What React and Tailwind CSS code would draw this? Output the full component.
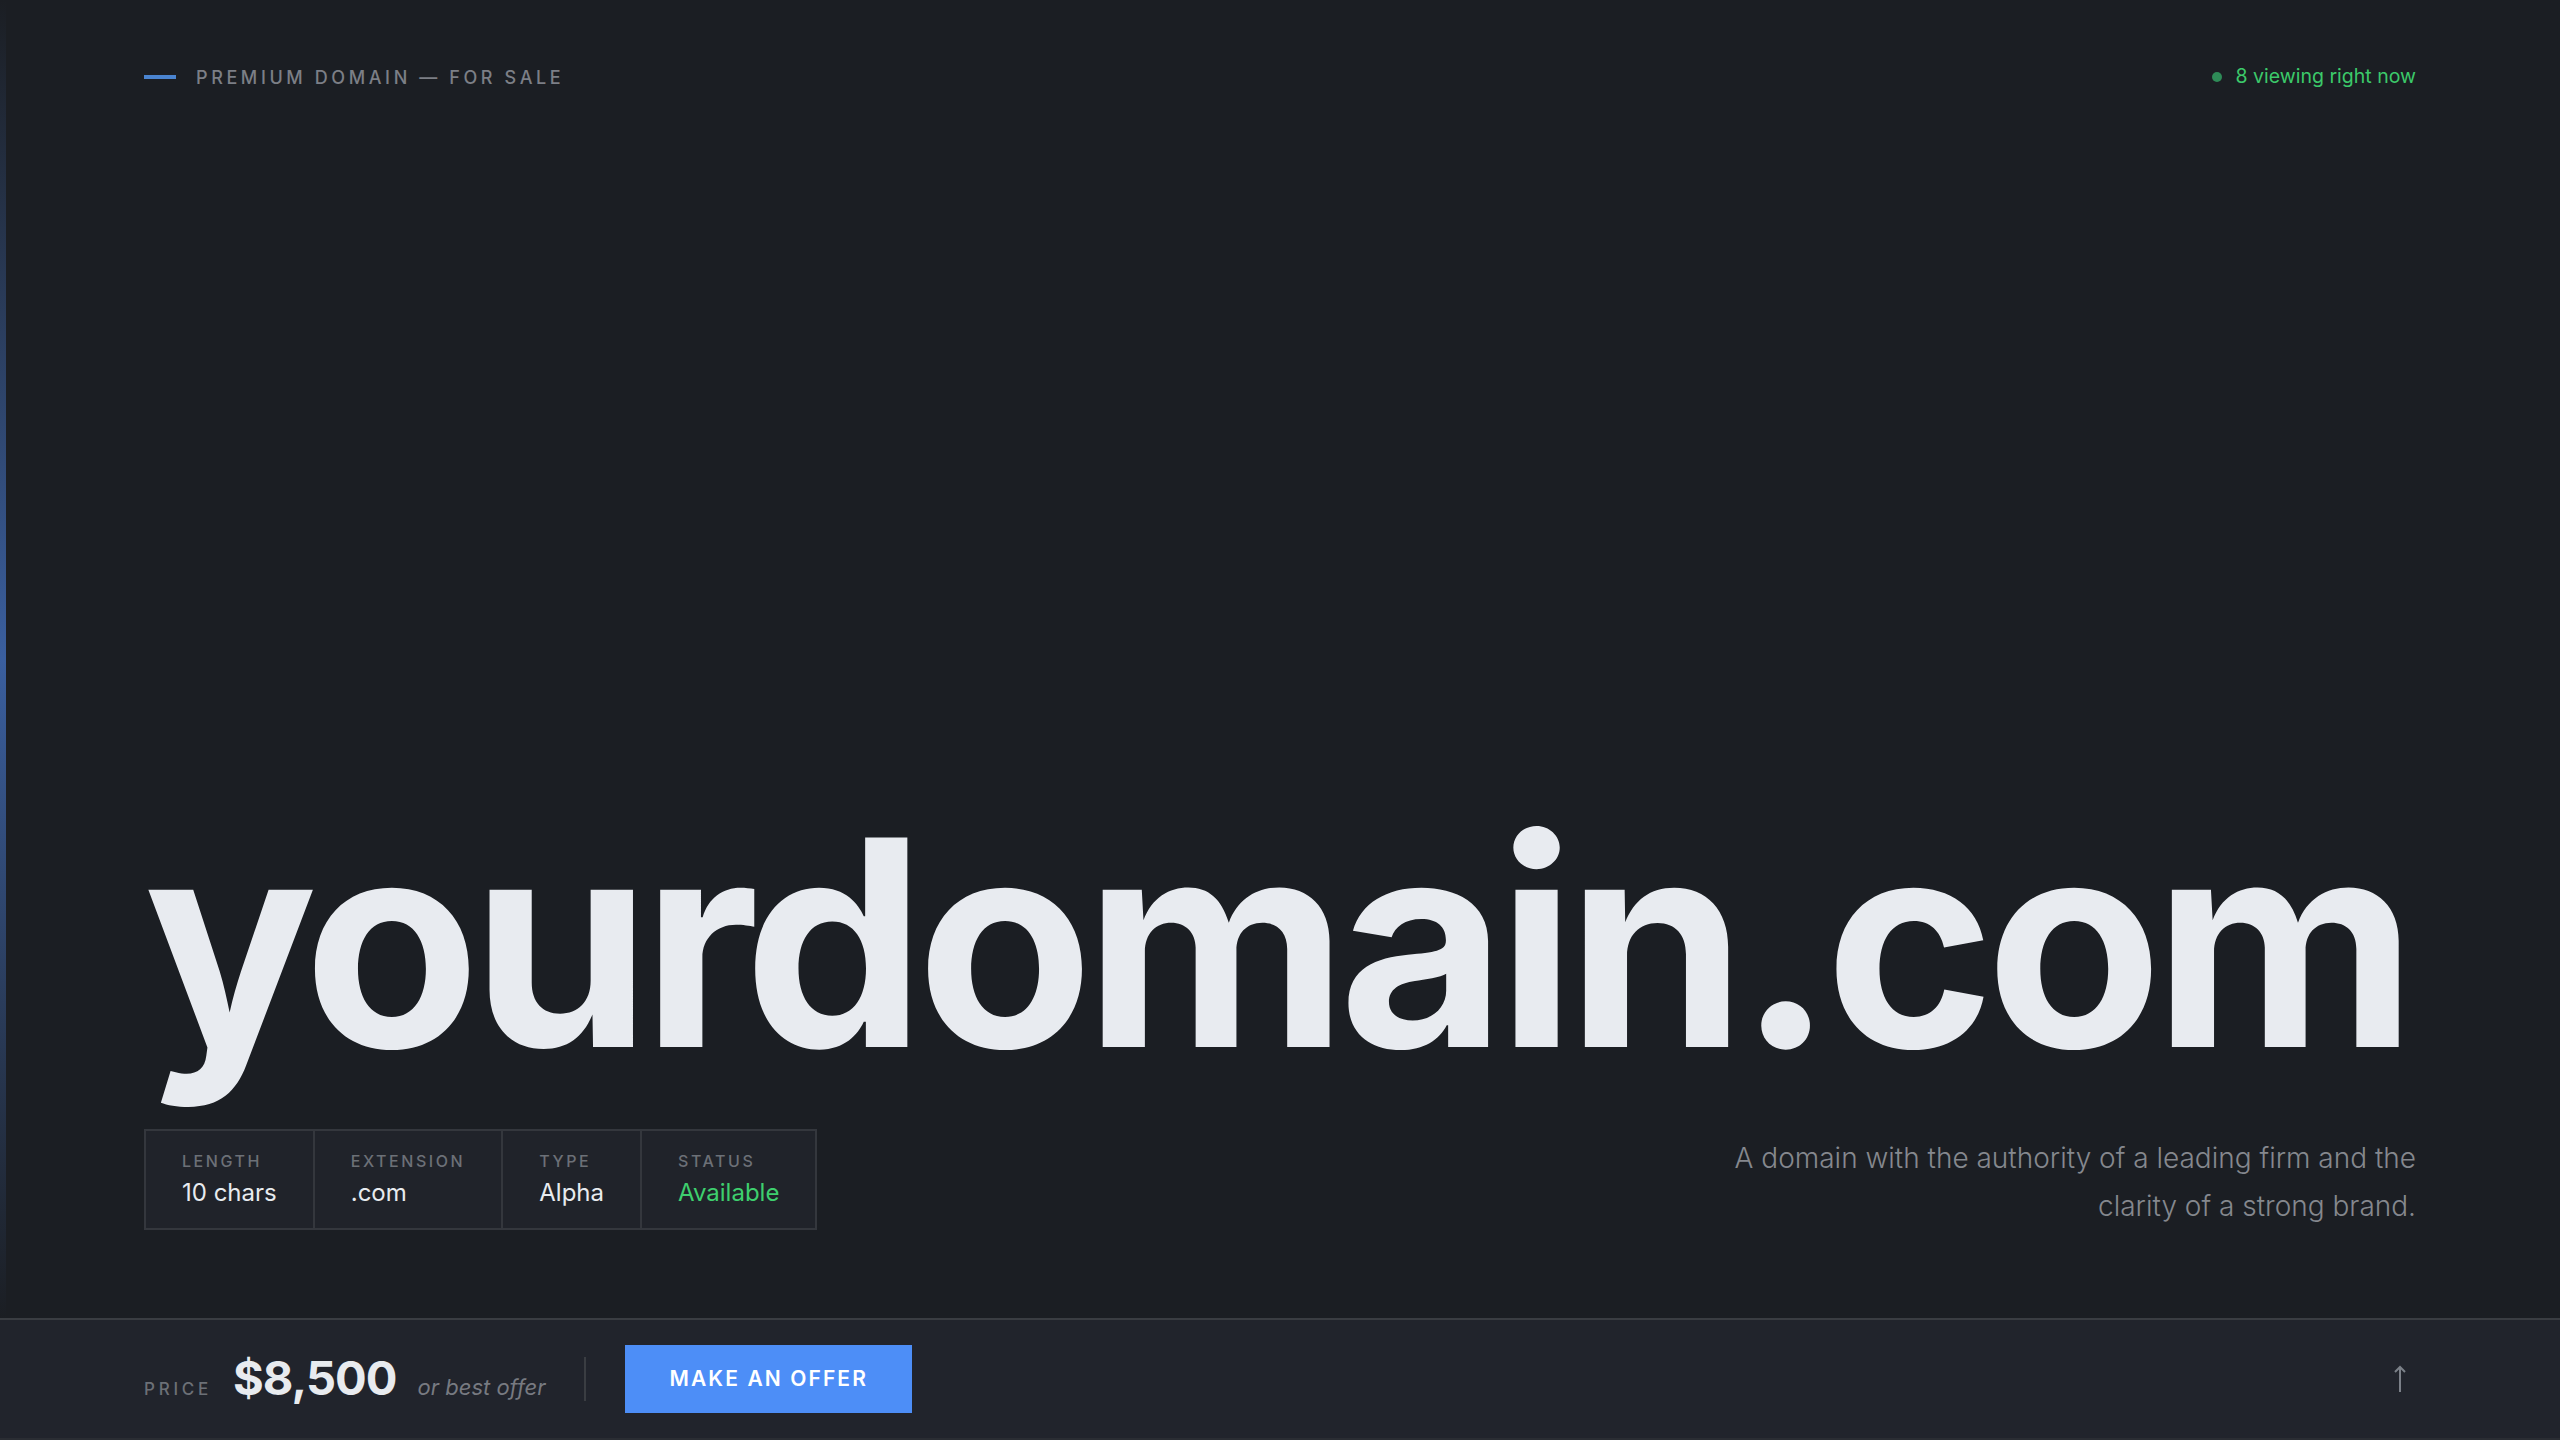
import React from "react";

const font = { fontFamily: "Inter, 'Noto Sans', sans-serif" };

function Stat({ label, value, green }) {
  return (
    <div className="flex flex-col px-9 pt-5 pb-[19px] border-l-2 border-[#34373d] first:border-l-0">
      <span className="text-[16px] leading-5 tracking-[0.16em] font-medium text-[#6c7077]">{label}</span>
      <span className={`mt-[6px] text-[24px] leading-8 ${green ? "text-[#3ecf6e]" : "text-[#e8ebef]"}`}>{value}</span>
    </div>
  );
}

export default function App() {
  return (
    <div className="h-screen w-full flex flex-col bg-[#1b1e23] overflow-hidden" style={font}>
      <div className="flex-1 flex min-h-0">
        <div className="w-[6px] shrink-0 bg-gradient-to-b from-[#1b1e23] via-[#3a5f9f] to-[#1b1e23]" />
        <div className="flex-1 flex flex-col pl-[138px] pr-36 pb-[88px]">
          <div className="pt-16 flex items-center justify-between h-[90px]">
            <div className="flex items-center h-[26px]">
              <span className="w-8 h-[4px] bg-[#4a84d0]" />
              <span className="ml-5 text-[18px] font-medium tracking-[0.2em] text-[#7c7f86]">PREMIUM DOMAIN — FOR SALE</span>
            </div>
            <div className="flex items-center h-[26px]">
              <span className="w-[10px] h-[10px] rounded-full bg-[#2e8b57]" />
              <span className="ml-[14px] text-[19.5px] text-[#3cc96a]">8 viewing right now</span>
            </div>
          </div>
          <div className="flex-1" />
          <div className="text-[288px] leading-none font-bold tracking-[-0.03em] text-[#e8ebf0] whitespace-nowrap">
            yourdomain.com
          </div>
          <div className="mt-[43px] flex items-end justify-between">
            <div className="flex border-2 border-[#34373d] bg-[#20232a]">
              <Stat label="LENGTH" value="10 chars" />
              <Stat label="EXTENSION" value=".com" />
              <Stat label="TYPE" value="Alpha" />
              <Stat label="STATUS" value="Available" green />
            </div>
            <p className="max-w-[720px] text-right text-[28px] leading-[48px] font-light text-[#85888e]">
              A domain with the authority of a leading firm and the clarity of a strong brand.
            </p>
          </div>
        </div>
      </div>
      <div className="h-[122px] shrink-0 border-t-2 border-b-2 border-t-[#3a3d42] border-b-[#2a2d33] bg-[#21242c] flex items-center px-36">
        <div className="flex items-baseline gap-[21px]">
          <span className="text-[17px] font-medium tracking-[0.22em] text-[#6c7077]">PRICE</span>
          <span className="text-[47px] font-bold tracking-[-0.02em] text-[#e8ebef] leading-none">$8,500</span>
          <span className="text-[22px] italic text-[#777a81]">or best offer</span>
        </div>
        <div className="mx-[39px] w-[2px] h-11 bg-[#3a3d42]" />
        <button className="h-[68px] px-11 bg-[#4d8ef7] text-white text-[21px] font-semibold tracking-[0.1em]">
          MAKE AN OFFER
        </button>
        <div className="ml-auto mr-[10px] flex items-center">
          <svg width="12" height="28" viewBox="0 0 12 28" fill="none" stroke="#7b8088" strokeWidth="2">
            <line x1="6" y1="27" x2="6" y2="2" />
            <polyline points="1,7 6,2 11,7" />
          </svg>
        </div>
      </div>
    </div>
  );
}
